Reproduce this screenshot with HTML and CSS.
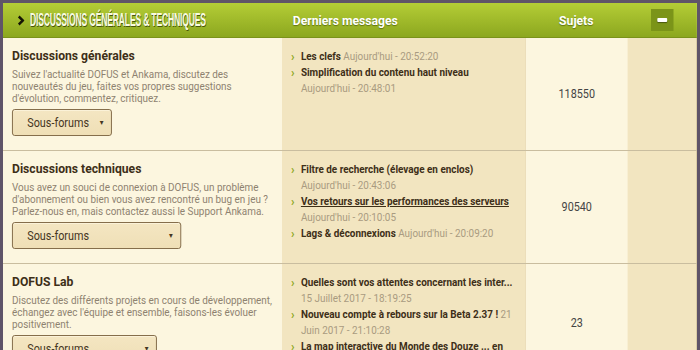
FILE: index.html
```html
<!DOCTYPE html>
<html lang="fr">
<head>
    <meta charset="UTF-8">
    <title>Forum DOFUS</title>
    <link rel="stylesheet" href="styles.css">
</head>
<body>
    <div class="forum">
        <div class="forum-head">
            <div class="head-title">
                <svg class="chevron" width="8" height="11" viewBox="0 0 8 11"><path d="M1.5 1.5 L6 5.5 L1.5 9.5" fill="none" stroke="#151505" stroke-width="2.6"/></svg>
                <span class="head-label">Discussions générales &amp; techniques</span>
            </div>
            <div class="head-last">Derniers messages</div>
            <div class="head-count">Sujets</div>
            <div class="head-toggle"><span class="toggle-btn"><span class="toggle-bar"></span></span></div>
        </div>

        <div class="forum-row">
            <div class="cell-info">
                <div class="cat-title">Discussions générales</div>
                <p class="cat-desc">Suivez l'actualité DOFUS et Ankama, discutez des nouveautés du jeu, faites vos propres suggestions d'évolution, commentez, critiquez.</p>
                <div class="subforums w-short">Sous-forums <span class="caret">▼</span></div>
            </div>
            <div class="cell-last">
                <ul class="posts">
                    <li><a class="post-link">Les clefs</a> <span class="post-date">Aujourd'hui - 20:52:20</span></li>
                    <li><a class="post-link">Simplification du contenu haut niveau</a> <span class="post-date">Aujourd'hui - 20:48:01</span></li>
                </ul>
            </div>
            <div class="cell-count">118550</div>
            <div class="cell-empty"></div>
        </div>

        <div class="forum-row">
            <div class="cell-info">
                <div class="cat-title">Discussions techniques</div>
                <p class="cat-desc">Vous avez un souci de connexion à DOFUS, un problème d'abonnement ou bien vous avez rencontré un bug en jeu ? Parlez-nous en, mais contactez aussi le Support Ankama.</p>
                <div class="subforums w-long">Sous-forums <span class="caret">▼</span></div>
            </div>
            <div class="cell-last">
                <ul class="posts">
                    <li><a class="post-link">Filtre de recherche (élevage en enclos)</a> <span class="post-date">Aujourd'hui - 20:43:06</span></li>
                    <li><a class="post-link hover">Vos retours sur les performances des serveurs</a> <span class="post-date">Aujourd'hui - 20:10:05</span></li>
                    <li><a class="post-link">Lags &amp; déconnexions</a> <span class="post-date">Aujourd'hui - 20:09:20</span></li>
                </ul>
            </div>
            <div class="cell-count">90540</div>
            <div class="cell-empty"></div>
        </div>

        <div class="forum-row">
            <div class="cell-info">
                <div class="cat-title">DOFUS Lab</div>
                <p class="cat-desc">Discutez des différents projets en cours de développement, échangez avec l'équipe et ensemble, faisons-les évoluer positivement.</p>
                <div class="subforums w-mid">Sous-forums <span class="caret">▼</span></div>
            </div>
            <div class="cell-last">
                <ul class="posts">
                    <li><a class="post-link">Quelles sont vos attentes concernant les inter...</a> <span class="post-date">15 Juillet 2017 - 18:19:25</span></li>
                    <li><a class="post-link">Nouveau compte à rebours sur la Beta 2.37 !</a> <span class="post-date">21 Juin 2017 - 21:10:28</span></li>
                    <li><a class="post-link">La map interactive du Monde des Douze ... en</a> <span class="post-date">Aujourd'hui - 19:02:11</span></li>
                </ul>
            </div>
            <div class="cell-count">23</div>
            <div class="cell-empty"></div>
        </div>
    </div>
</body>
</html>
```

FILE: styles.css
```css
body {
    margin: 0;
    overflow: hidden;
    background-color: #5f5468;
    font-family: Roboto, "Liberation Sans", sans-serif;
}

/* the board is drawn a bit narrower than its text, like the original capture */
.forum {
    width: 771px;
    margin: 3px 0 0 3px;
    background-color: #fcf6df;
    transform: scaleX(0.9);
    transform-origin: 0 0;
}

.forum-head,
.forum-row {
    display: grid;
    grid-template-columns: 310px 270px 114px 77px;
}

/* header bar */
.forum-head {
    height: 34px;
    background: linear-gradient(#b4cd36, #8ca71f);
    border-bottom: 1px solid #7a921a;
    align-items: center;
    color: #fff;
    font-weight: bold;
    font-size: 13.5px;
    text-shadow: 0 1px 1px rgba(60, 75, 5, 0.6);
}

.head-title {
    display: flex;
    align-items: center;
    padding-left: 16px;
    min-width: 0;
}

.chevron {
    flex: none;
    margin-right: 6px;
}

.head-label {
    display: inline-block;
    flex: none;
    font-family: "Liberation Sans Narrow", "Liberation Sans", sans-serif;
    text-transform: uppercase;
    font-size: 18px;
    color: #f8fbe0;
    letter-spacing: -0.5px;
    transform: scaleX(0.535);
    transform-origin: left center;
    white-space: nowrap;
    text-shadow: 1px 1px 0 #46560a;
}

.head-last {
    padding-left: 12px;
}

.head-count {
    text-align: center;
}

.head-toggle {
    display: flex;
    justify-content: center;
}

.toggle-btn {
    display: flex;
    align-items: center;
    justify-content: center;
    width: 25px;
    height: 22px;
    background-color: #7b9419;
}

.toggle-bar {
    width: 11px;
    height: 4px;
    background-color: #fff;
    border-radius: 1px;
    box-shadow: 0 1px 1px rgba(0, 0, 0, 0.4);
}

/* rows */
.forum-row {
    border-bottom: 1px solid #c9bd9f;
}

.cell-info {
    padding: 9px 6px 14px 10px;
}

.cat-title {
    font-weight: bold;
    font-size: 13.5px;
    color: #3e2f18;
    margin-bottom: 6px;
}

.cat-desc {
    margin: 0 0 4px 0;
    font-size: 11px;
    line-height: 12px;
    color: #8e8270;
}

.subforums {
    display: flex;
    justify-content: space-between;
    align-items: center;
    box-sizing: border-box;
    height: 27px;
    padding: 0 7px 0 16px;
    background: linear-gradient(#f4e6c2, #efdfb6);
    border: 1px solid #7e6642;
    border-radius: 3px;
    box-shadow: inset 0 1px 0 #fbf2d8;
    font-size: 12px;
    color: #45361f;
}

.w-short { width: 111px; }
.w-mid { width: 161px; }
.w-long { width: 188px; }

.caret {
    font-size: 7px;
}

.cell-last {
    background-color: #f2e5c0;
    padding: 11px 6px 10px 10px;
}

.posts {
    list-style: none;
    margin: 0;
    padding: 0;
    font-size: 11px;
    line-height: 16px;
}

.posts li {
    position: relative;
    padding-left: 11px;
}

.posts li::before {
    content: "›";
    position: absolute;
    left: 0;
    top: 0;
    color: #8ca71f;
    font-weight: bold;
    font-size: 13px;
}

.post-link {
    font-weight: bold;
    color: #3e2f18;
}

.post-link.hover {
    text-decoration: underline;
}

.post-date {
    color: #a99b80;
}

.cell-count {
    display: flex;
    align-items: center;
    justify-content: center;
    font-size: 12px;
    color: #444;
    border-left: 1px solid #eadcb6;
}

.cell-empty {
    background-color: #f2e5c0;
    border-right: 1px solid #d8c9a2;
}
```
